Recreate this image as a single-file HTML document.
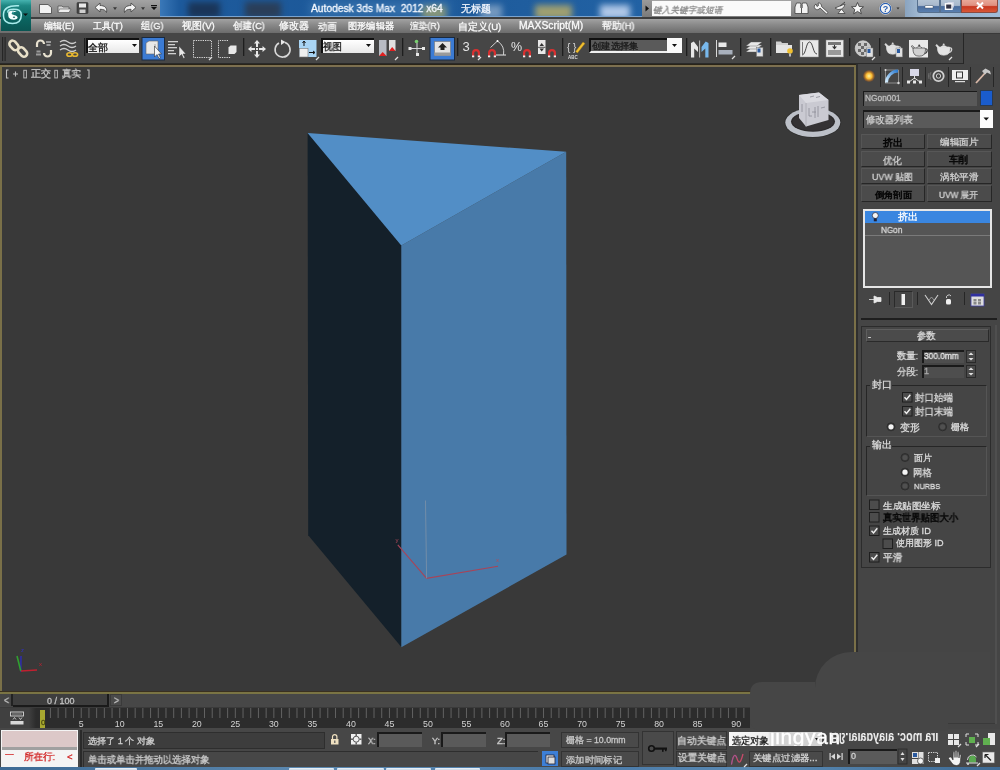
<!DOCTYPE html>
<html><head><meta charset="utf-8">
<style>
*{margin:0;padding:0;box-sizing:border-box}
html,body{width:1000px;height:770px;overflow:hidden;background:#464646;font-family:"Liberation Sans",sans-serif;}
.a{position:absolute}
.t{position:absolute;white-space:nowrap;line-height:1;color:#dcdcdc;will-change:transform;-webkit-text-stroke:0.3px currentColor}
svg{position:absolute;left:0;top:0;will-change:transform}
</style></head><body>
<div class="a" style="left:0px;top:0px;width:1000px;height:18px;background:linear-gradient(#a4a4a4,#7c7c7c)"></div>
<div class="a" style="left:0px;top:17px;width:1000px;height:1px;background:#3c3c3c"></div>
<div class="a" style="left:160px;top:0;width:482px;height:17px;overflow:hidden;background:linear-gradient(90deg,#3a78b8 0%,#1d5a9c 4%,#1c5898 50%,#2262a4 100%)"><div class="a" style="left:28px;top:2px;width:32px;height:16px;background:#1a3558;filter:blur(3px)"></div><div class="a" style="left:85px;top:2px;width:36px;height:16px;background:#2a3e58;filter:blur(3px)"></div><div class="a" style="left:150px;top:1px;width:140px;height:16px;background:#3f7ab4;filter:blur(5px);opacity:0.7"></div><div class="a" style="left:262px;top:6px;width:24px;height:14px;background:#9aa070;filter:blur(3px);opacity:0.8"></div><div class="a" style="left:320px;top:5px;width:22px;height:14px;background:#8aa8c8;filter:blur(3px);opacity:0.8"></div><div class="a" style="left:375px;top:5px;width:37px;height:14px;background:#a0a070;filter:blur(3px)"></div><div class="a" style="left:440px;top:5px;width:30px;height:14px;background:#b0c8e8;filter:blur(3px)"></div></div>
<div class="a" style="left:160px;top:15.5px;width:482px;height:1.5px;background:#7aa4d0"></div>
<div class="a" style="left:642px;top:0px;width:10px;height:17px;background:linear-gradient(#9a9a9a,#7a7a7a)"></div>
<div class="a" style="left:652px;top:1px;width:139px;height:15px;background:#fafafa"></div>
<div class="a" style="left:905px;top:0px;width:95px;height:17px;background:linear-gradient(90deg,#8aa4c0,#a8c0d8 20%,#98b4d0 60%,#a0bcd8)"></div>
<div class="a" style="left:917px;top:0px;width:23px;height:12.5px;background:linear-gradient(#b4c4d4 0%,#a8b8cc 45%,#4a6c9c 55%,#5a80b0 100%);border:1px solid #56708e;border-top:none;border-radius:0 0 0 3px"></div>
<div class="a" style="left:940px;top:0px;width:21px;height:12.5px;background:linear-gradient(#b4c4d4 0%,#a8b8cc 45%,#4a6c9c 55%,#5a80b0 100%);border:1px solid #56708e;border-top:none"></div>
<div class="a" style="left:961px;top:0px;width:37px;height:12.5px;background:linear-gradient(#e8a898 0%,#e09080 45%,#c83820 55%,#d85838 100%);border:1px solid #8a4a40;border-top:none;border-radius:0 0 3px 0"></div>
<div class="a" style="left:0px;top:17px;width:1000px;height:2px;background:#3e3e3e"></div>
<div class="a" style="left:0px;top:19px;width:1000px;height:14px;background:linear-gradient(#a2a2a2,#8a8a8a 40%,#6c6c6c)"></div>
<div class="a" style="left:0px;top:33px;width:1000px;height:1px;background:#3a3a3a"></div>
<div class="a" style="left:1px;top:0px;width:30px;height:31px;background:linear-gradient(#46b3b0 0%,#1e8783 18%,#0b6561 60%,#0a5552 100%)"></div>
<div class="a" style="left:0px;top:33px;width:963px;height:31px;background:#464646"></div>
<div class="a" style="left:963px;top:33px;width:1px;height:31px;background:#262626"></div>
<div class="a" style="left:0px;top:63px;width:963px;height:1px;background:#2a2a2a"></div>
<div class="a" style="left:86px;top:38px;width:53px;height:15px;background:linear-gradient(#fff,#e8e8e8);border-top:2px solid #111;border-left:2px solid #111"></div>
<div class="a" style="left:321px;top:38px;width:53px;height:15px;background:linear-gradient(#fff,#e8e8e8);border-top:2px solid #111;border-left:2px solid #111"></div>
<div class="a" style="left:589px;top:38px;width:93px;height:15px;background:#5a5a5a;border:2px solid #f0f0f0;border-top-color:#111;border-left-color:#111"></div>
<div class="a" style="left:667px;top:38px;width:15px;height:15px;background:#fafafa"></div>
<div class="a" style="left:0px;top:64px;width:857px;height:630px;background:#393939"></div>
<div class="a" style="left:0px;top:64px;width:857px;height:1px;background:#2a2418"></div>
<div class="a" style="left:0px;top:65px;width:856px;height:2px;background:#7d7050"></div>
<div class="a" style="left:0px;top:65px;width:2px;height:629px;background:#7a7048"></div>
<div class="a" style="left:854px;top:65px;width:2px;height:629px;background:#7a7048"></div>
<div class="a" style="left:0px;top:691px;width:856px;height:1px;background:#3a3020"></div>
<div class="a" style="left:0px;top:692px;width:856px;height:2px;background:#7a7444"></div>
<div class="a" style="left:856px;top:64px;width:2px;height:630px;background:#2e2e2e"></div>
<div class="a" style="left:858px;top:64px;width:142px;height:666px;background:#454545"></div>
<div class="a" style="left:880px;top:67px;width:1px;height:20px;background:#262626"></div>
<div class="a" style="left:902px;top:67px;width:1px;height:20px;background:#262626"></div>
<div class="a" style="left:925px;top:67px;width:1px;height:20px;background:#262626"></div>
<div class="a" style="left:948px;top:67px;width:1px;height:20px;background:#262626"></div>
<div class="a" style="left:970px;top:67px;width:1px;height:20px;background:#262626"></div>
<div class="a" style="left:993px;top:67px;width:1px;height:20px;background:#262626"></div>
<div class="a" style="left:863px;top:91px;width:114px;height:15px;background:#595959;border-top:1px solid #1a1a1a;border-left:1px solid #1a1a1a"></div>
<div class="a" style="left:980px;top:90px;width:13px;height:16px;background:#1a5ccc;border:1px solid #2a3a50"></div>
<div class="a" style="left:863px;top:110px;width:117px;height:18px;background:#5a5a5a;border-top:2px solid #1a1a1a;border-left:1px solid #1a1a1a"></div>
<div class="a" style="left:980px;top:110px;width:13px;height:18px;background:#fdfdfd"></div>
<div class="a" style="left:861px;top:134px;width:64px;height:15px;background:#4b4b4b;border-right:1px solid #262626;border-bottom:1px solid #262626;border-top:1px solid #575757;border-left:1px solid #555"></div>
<div class="a" style="left:927px;top:134px;width:65px;height:15px;background:#4b4b4b;border-right:1px solid #262626;border-bottom:1px solid #262626;border-top:1px solid #575757;border-left:1px solid #555"></div>
<div class="a" style="left:861px;top:151px;width:64px;height:16px;background:#4b4b4b;border-right:1px solid #262626;border-bottom:1px solid #262626;border-top:1px solid #575757;border-left:1px solid #555"></div>
<div class="a" style="left:927px;top:151px;width:65px;height:16px;background:#4b4b4b;border-right:1px solid #262626;border-bottom:1px solid #262626;border-top:1px solid #575757;border-left:1px solid #555"></div>
<div class="a" style="left:861px;top:168px;width:64px;height:16px;background:#4b4b4b;border-right:1px solid #262626;border-bottom:1px solid #262626;border-top:1px solid #575757;border-left:1px solid #555"></div>
<div class="a" style="left:927px;top:168px;width:65px;height:16px;background:#4b4b4b;border-right:1px solid #262626;border-bottom:1px solid #262626;border-top:1px solid #575757;border-left:1px solid #555"></div>
<div class="a" style="left:861px;top:185px;width:64px;height:17px;background:#4b4b4b;border-right:1px solid #262626;border-bottom:1px solid #262626;border-top:1px solid #575757;border-left:1px solid #555"></div>
<div class="a" style="left:927px;top:185px;width:65px;height:17px;background:#4b4b4b;border-right:1px solid #262626;border-bottom:1px solid #262626;border-top:1px solid #575757;border-left:1px solid #555"></div>
<div class="a" style="left:863px;top:209px;width:129px;height:79px;background:#555;border:2px solid #e6e6e6"></div>
<div class="a" style="left:865px;top:211px;width:125px;height:12px;background:#3a86e0"></div>
<div class="a" style="left:865px;top:235px;width:125px;height:1px;background:#7a7a7a"></div>
<div class="a" style="left:894px;top:291px;width:19px;height:17px;border:1px solid #2a2a2a;border-right-color:#5a5a5a;border-bottom-color:#5a5a5a"></div>
<div class="a" style="left:889px;top:292px;width:1px;height:13px;background:#262626"></div>
<div class="a" style="left:917px;top:292px;width:1px;height:13px;background:#262626"></div>
<div class="a" style="left:964px;top:292px;width:1px;height:13px;background:#262626"></div>
<div class="a" style="left:861px;top:318px;width:136px;height:2px;background:#1e1e1e"></div>
<div class="a" style="left:995px;top:325px;width:1.5px;height:399px;background:#4f4f4f"></div>
<div class="a" style="left:861px;top:723px;width:134px;height:1px;background:#3a3a3a"></div>
<div class="a" style="left:861px;top:326px;width:130px;height:242px;border:1px solid #2c2c2c"></div>
<div class="a" style="left:866px;top:329px;width:123px;height:13px;background:#4b4b4b;border:1px solid #5e5e5e;border-bottom-color:#2a2a2a;border-right-color:#2a2a2a"></div>
<div class="a" style="left:922px;top:350px;width:42px;height:13px;background:#4e4e4e;border-top:2px solid #1a1a1a;border-left:2px solid #1a1a1a"></div>
<div class="a" style="left:966px;top:350px;width:10px;height:13px;background:#4a4a4a;border:1px solid #2a2a2a"></div>
<div class="a" style="left:922px;top:365px;width:42px;height:13px;background:#4e4e4e;border-top:2px solid #1a1a1a;border-left:2px solid #1a1a1a"></div>
<div class="a" style="left:966px;top:365px;width:10px;height:13px;background:#4a4a4a;border:1px solid #2a2a2a"></div>
<div class="a" style="left:866px;top:385px;width:121px;height:52px;border:1px solid #262626;border-right-color:#555;border-bottom-color:#555"></div>
<div class="a" style="left:866px;top:446px;width:121px;height:50px;border:1px solid #262626;border-right-color:#555;border-bottom-color:#555"></div>
<div class="a" style="left:870px;top:380px;width:22px;height:10px;background:#464646"></div>
<div class="a" style="left:870px;top:441px;width:22px;height:10px;background:#464646"></div>
<div class="a" style="left:0px;top:694px;width:750px;height:14px;background:#474747"></div>
<div class="a" style="left:0px;top:694px;width:11px;height:12px;background:#454545"></div>
<div class="a" style="left:11px;top:694px;width:2px;height:12px;background:#222"></div>
<div class="a" style="left:13px;top:694px;width:96px;height:13px;background:#3e3e3e;border-bottom:2px solid #1a1a1a;border-right:2px solid #1a1a1a"></div>
<div class="a" style="left:110px;top:694px;width:12px;height:12px;background:#4a4a4a;border:1px solid #3a3a3a"></div>
<div class="a" style="left:0px;top:707px;width:750px;height:1px;background:#3a3a3a"></div>
<div class="a" style="left:0px;top:708px;width:750px;height:20px;background:#2c2c2c"></div>
<div class="a" style="left:0px;top:708px;width:36px;height:20px;background:linear-gradient(90deg,#404040 0%,#404040 80%,#2c2c2c 100%)"></div>
<div class="a" style="left:0px;top:728px;width:750px;height:3px;background:#474747"></div>
<div class="a" style="left:40px;top:710px;width:5px;height:18px;background:#a8a830"></div>
<div class="a" style="left:0px;top:729px;width:1000px;height:38px;background:#474747"></div>
<div class="a" style="left:80px;top:730px;width:2px;height:37px;background:#2a2a2a"></div>
<div class="a" style="left:1px;top:730px;width:77px;height:37px;background:#f4f4f4"></div>
<div class="a" style="left:2px;top:731px;width:75px;height:16px;background:#dcc8c8"></div>
<div class="a" style="left:2px;top:747px;width:75px;height:3px;background:#a0a0a0"></div>
<div class="a" style="left:83px;top:732px;width:242px;height:17px;background:#3d3d3d;border:1px solid #2e2e2e"></div>
<div class="a" style="left:83px;top:751px;width:455px;height:16px;background:#474747;border-top:1px solid #2e2e2e;border-left:1px solid #2e2e2e"></div>
<div class="a" style="left:377px;top:732px;width:45px;height:15px;background:#5a5a5a;border-top:2px solid #1a1a1a;border-left:2px solid #1a1a1a"></div>
<div class="a" style="left:441px;top:732px;width:45px;height:15px;background:#5a5a5a;border-top:2px solid #1a1a1a;border-left:2px solid #1a1a1a"></div>
<div class="a" style="left:505px;top:732px;width:45px;height:15px;background:#5a5a5a;border-top:2px solid #1a1a1a;border-left:2px solid #1a1a1a"></div>
<div class="a" style="left:561px;top:732px;width:78px;height:16px;background:#4a4a4a;border:1px solid #333"></div>
<div class="a" style="left:561px;top:751px;width:78px;height:16px;background:#4a4a4a;border:1px solid #333"></div>
<div class="a" style="left:542px;top:751px;width:16px;height:15px;background:#3d7fd6"></div>
<div class="a" style="left:642px;top:731px;width:32px;height:34px;background:#4a4a4a;border:1px solid #333"></div>
<div class="a" style="left:676px;top:731px;width:51px;height:19px;background:#4a4a4a;border:1px solid #333"></div>
<div class="a" style="left:676px;top:751px;width:51px;height:16px;background:#4a4a4a;border:1px solid #333"></div>
<div class="a" style="left:729px;top:732px;width:93px;height:14px;background:linear-gradient(90deg,#f6f6f6 0%,#f0f0f0 42%,#d2d2d2 46%,#d2d2d2 100%)"></div>
<div class="a" style="left:749px;top:751px;width:74px;height:16px;background:#4a4a4a;border:1px solid #333"></div>
<div class="a" style="left:848px;top:749px;width:49px;height:15px;background:#5a5a5a;border-top:2px solid #1a1a1a;border-left:2px solid #1a1a1a"></div>
<div class="a" style="left:0px;top:767px;width:1000px;height:3px;background:linear-gradient(90deg,#3d6a94,#5b88b0 30%,#4a7aa8 60%,#5a8ab4 75%,#3d6a94)"></div>
<div class="a" style="left:95px;top:767.5px;width:42px;height:2.5px;background:linear-gradient(#f0f4f8,#c8d8e8);border-radius:1px 1px 0 0"></div>
<div class="a" style="left:289px;top:767.5px;width:45px;height:2.5px;background:linear-gradient(#f0f4f8,#c8d8e8);border-radius:1px 1px 0 0"></div>
<div class="a" style="left:337px;top:767.5px;width:47px;height:2.5px;background:linear-gradient(#f0f4f8,#c8d8e8);border-radius:1px 1px 0 0"></div>
<div class="a" style="left:386px;top:767.5px;width:45px;height:2.5px;background:linear-gradient(#f0f4f8,#c8d8e8);border-radius:1px 1px 0 0"></div>
<div class="a" style="left:435px;top:767.5px;width:45px;height:2.5px;background:linear-gradient(#f0f4f8,#c8d8e8);border-radius:1px 1px 0 0"></div>
<svg width="1000" height="770" viewBox="0 0 1000 770"><path d="M8.5,70 H6.5 V78 H8.5 M87,70 H89 V78 H87" fill="none" stroke="#c0c0c0" stroke-width="1.1"/><path d="M15.5,71.5 V76.5 M13,74 H18" stroke="#c0c0c0" stroke-width="1.1"/><rect x="23.8" y="70.3" width="2.6" height="7.6" fill="none" stroke="#b8b8b8" stroke-width="1"/><rect x="54.8" y="70.3" width="2.6" height="7.6" fill="none" stroke="#b8b8b8" stroke-width="1"/><rect x="49.91" y="708" width="1" height="10" fill="#626262"/><rect x="57.61" y="708" width="1" height="10" fill="#626262"/><rect x="65.31" y="708" width="1" height="10" fill="#626262"/><rect x="73.02" y="708" width="1" height="10" fill="#626262"/><rect x="80.72" y="708" width="1" height="10" fill="#626262"/><text x="81.22" y="726.6" font-size="8.8" text-anchor="middle" fill="#d4d4d4" font-family="Liberation Sans">5</text><rect x="88.43" y="708" width="1" height="10" fill="#626262"/><rect x="96.14" y="708" width="1" height="10" fill="#626262"/><rect x="103.84" y="708" width="1" height="10" fill="#626262"/><rect x="111.55" y="708" width="1" height="10" fill="#626262"/><rect x="119.25" y="708" width="1" height="10" fill="#626262"/><text x="119.75" y="726.6" font-size="8.8" text-anchor="middle" fill="#d4d4d4" font-family="Liberation Sans">10</text><rect x="126.95" y="708" width="1" height="10" fill="#626262"/><rect x="134.66" y="708" width="1" height="10" fill="#626262"/><rect x="142.37" y="708" width="1" height="10" fill="#626262"/><rect x="150.07" y="708" width="1" height="10" fill="#626262"/><rect x="157.78" y="708" width="1" height="10" fill="#626262"/><text x="158.28" y="726.6" font-size="8.8" text-anchor="middle" fill="#d4d4d4" font-family="Liberation Sans">15</text><rect x="165.48" y="708" width="1" height="10" fill="#626262"/><rect x="173.19" y="708" width="1" height="10" fill="#626262"/><rect x="180.89" y="708" width="1" height="10" fill="#626262"/><rect x="188.60" y="708" width="1" height="10" fill="#626262"/><rect x="196.30" y="708" width="1" height="10" fill="#626262"/><text x="196.80" y="726.6" font-size="8.8" text-anchor="middle" fill="#d4d4d4" font-family="Liberation Sans">20</text><rect x="204.00" y="708" width="1" height="10" fill="#626262"/><rect x="211.71" y="708" width="1" height="10" fill="#626262"/><rect x="219.42" y="708" width="1" height="10" fill="#626262"/><rect x="227.12" y="708" width="1" height="10" fill="#626262"/><rect x="234.82" y="708" width="1" height="10" fill="#626262"/><text x="235.32" y="726.6" font-size="8.8" text-anchor="middle" fill="#d4d4d4" font-family="Liberation Sans">25</text><rect x="242.53" y="708" width="1" height="10" fill="#626262"/><rect x="250.24" y="708" width="1" height="10" fill="#626262"/><rect x="257.94" y="708" width="1" height="10" fill="#626262"/><rect x="265.64" y="708" width="1" height="10" fill="#626262"/><rect x="273.35" y="708" width="1" height="10" fill="#626262"/><text x="273.85" y="726.6" font-size="8.8" text-anchor="middle" fill="#d4d4d4" font-family="Liberation Sans">30</text><rect x="281.06" y="708" width="1" height="10" fill="#626262"/><rect x="288.76" y="708" width="1" height="10" fill="#626262"/><rect x="296.47" y="708" width="1" height="10" fill="#626262"/><rect x="304.17" y="708" width="1" height="10" fill="#626262"/><rect x="311.88" y="708" width="1" height="10" fill="#626262"/><text x="312.38" y="726.6" font-size="8.8" text-anchor="middle" fill="#d4d4d4" font-family="Liberation Sans">35</text><rect x="319.58" y="708" width="1" height="10" fill="#626262"/><rect x="327.28" y="708" width="1" height="10" fill="#626262"/><rect x="334.99" y="708" width="1" height="10" fill="#626262"/><rect x="342.69" y="708" width="1" height="10" fill="#626262"/><rect x="350.40" y="708" width="1" height="10" fill="#626262"/><text x="350.90" y="726.6" font-size="8.8" text-anchor="middle" fill="#d4d4d4" font-family="Liberation Sans">40</text><rect x="358.11" y="708" width="1" height="10" fill="#626262"/><rect x="365.81" y="708" width="1" height="10" fill="#626262"/><rect x="373.51" y="708" width="1" height="10" fill="#626262"/><rect x="381.22" y="708" width="1" height="10" fill="#626262"/><rect x="388.93" y="708" width="1" height="10" fill="#626262"/><text x="389.43" y="726.6" font-size="8.8" text-anchor="middle" fill="#d4d4d4" font-family="Liberation Sans">45</text><rect x="396.63" y="708" width="1" height="10" fill="#626262"/><rect x="404.33" y="708" width="1" height="10" fill="#626262"/><rect x="412.04" y="708" width="1" height="10" fill="#626262"/><rect x="419.75" y="708" width="1" height="10" fill="#626262"/><rect x="427.45" y="708" width="1" height="10" fill="#626262"/><text x="427.95" y="726.6" font-size="8.8" text-anchor="middle" fill="#d4d4d4" font-family="Liberation Sans">50</text><rect x="435.15" y="708" width="1" height="10" fill="#626262"/><rect x="442.86" y="708" width="1" height="10" fill="#626262"/><rect x="450.56" y="708" width="1" height="10" fill="#626262"/><rect x="458.27" y="708" width="1" height="10" fill="#626262"/><rect x="465.97" y="708" width="1" height="10" fill="#626262"/><text x="466.47" y="726.6" font-size="8.8" text-anchor="middle" fill="#d4d4d4" font-family="Liberation Sans">55</text><rect x="473.68" y="708" width="1" height="10" fill="#626262"/><rect x="481.38" y="708" width="1" height="10" fill="#626262"/><rect x="489.09" y="708" width="1" height="10" fill="#626262"/><rect x="496.80" y="708" width="1" height="10" fill="#626262"/><rect x="504.50" y="708" width="1" height="10" fill="#626262"/><text x="505.00" y="726.6" font-size="8.8" text-anchor="middle" fill="#d4d4d4" font-family="Liberation Sans">60</text><rect x="512.21" y="708" width="1" height="10" fill="#626262"/><rect x="519.91" y="708" width="1" height="10" fill="#626262"/><rect x="527.62" y="708" width="1" height="10" fill="#626262"/><rect x="535.32" y="708" width="1" height="10" fill="#626262"/><rect x="543.02" y="708" width="1" height="10" fill="#626262"/><text x="543.52" y="726.6" font-size="8.8" text-anchor="middle" fill="#d4d4d4" font-family="Liberation Sans">65</text><rect x="550.73" y="708" width="1" height="10" fill="#626262"/><rect x="558.44" y="708" width="1" height="10" fill="#626262"/><rect x="566.14" y="708" width="1" height="10" fill="#626262"/><rect x="573.85" y="708" width="1" height="10" fill="#626262"/><rect x="581.55" y="708" width="1" height="10" fill="#626262"/><text x="582.05" y="726.6" font-size="8.8" text-anchor="middle" fill="#d4d4d4" font-family="Liberation Sans">70</text><rect x="589.25" y="708" width="1" height="10" fill="#626262"/><rect x="596.96" y="708" width="1" height="10" fill="#626262"/><rect x="604.67" y="708" width="1" height="10" fill="#626262"/><rect x="612.37" y="708" width="1" height="10" fill="#626262"/><rect x="620.08" y="708" width="1" height="10" fill="#626262"/><text x="620.58" y="726.6" font-size="8.8" text-anchor="middle" fill="#d4d4d4" font-family="Liberation Sans">75</text><rect x="627.78" y="708" width="1" height="10" fill="#626262"/><rect x="635.49" y="708" width="1" height="10" fill="#626262"/><rect x="643.19" y="708" width="1" height="10" fill="#626262"/><rect x="650.90" y="708" width="1" height="10" fill="#626262"/><rect x="658.60" y="708" width="1" height="10" fill="#626262"/><text x="659.10" y="726.6" font-size="8.8" text-anchor="middle" fill="#d4d4d4" font-family="Liberation Sans">80</text><rect x="666.31" y="708" width="1" height="10" fill="#626262"/><rect x="674.01" y="708" width="1" height="10" fill="#626262"/><rect x="681.72" y="708" width="1" height="10" fill="#626262"/><rect x="689.42" y="708" width="1" height="10" fill="#626262"/><rect x="697.12" y="708" width="1" height="10" fill="#626262"/><text x="697.62" y="726.6" font-size="8.8" text-anchor="middle" fill="#d4d4d4" font-family="Liberation Sans">85</text><rect x="704.83" y="708" width="1" height="10" fill="#626262"/><rect x="712.54" y="708" width="1" height="10" fill="#626262"/><rect x="720.24" y="708" width="1" height="10" fill="#626262"/><rect x="727.95" y="708" width="1" height="10" fill="#626262"/><rect x="735.65" y="708" width="1" height="10" fill="#626262"/><text x="736.15" y="726.6" font-size="8.8" text-anchor="middle" fill="#d4d4d4" font-family="Liberation Sans">90</text><rect x="743.36" y="708" width="1" height="10" fill="#626262"/><polygon points="307.6,133.1 401.5,245.5 401.5,647.2 308.2,535.2" fill="#14202a"/><polygon points="401.3,245.5 566.2,151.8 566.5,554.4 401.3,647.2" fill="#487aa9"/><polygon points="307.6,133.1 566.2,151.8 401.3,245.5" fill="#528ec6"/><polyline points="397.8,544.8 426.6,578.4 498,566.2" fill="none" stroke="#a84458" stroke-width="1.1"/><line x1="426.6" y1="578.4" x2="425.5" y2="500.5" stroke="#7890a8" stroke-width="0.9"/><path d="M762,682 L815,682 L815,688 A36,36 0 0 1 851,652 L990,652 L990,723 L948,723 L948,731 L762,731 C754,731 750,726 750,719 L750,694 C750,686 754,682 762,682 Z" fill="#464646"/><path d="M18.5,5.8 C12,5.5 4,6.5 3.5,14 C3,21 7,23.5 12.5,23.5 C18,23.5 21.3,21 21.3,15 C21.3,10 18.5,9.3 13.5,9.3 C10,9.3 7.8,10.5 7.8,12" fill="none" stroke="#a8ecec" stroke-width="1.5" stroke-linecap="round"/><path d="M8.2,13 C8.5,10.3 14,10 16.8,12 C14.5,11.8 11.6,12.2 11.6,13.6 C11.6,15.2 17.6,15 17.6,17.6 C17.6,20.3 10.5,20.6 8.6,17.2 C8.2,16 8.2,14.5 8.2,13 Z" fill="#f4ffff"/><circle cx="13" cy="12.6" r="1" fill="#3aa0a0"/><ellipse cx="14" cy="17.3" rx="1.2" ry="0.7" fill="#2a7070"/><polygon points="23,13.5 28,13.5 25.5,16" fill="#111"/><path d="M39.5,4.5 H48 L51.5,7.5 V13.5 H39.5 Z" fill="#f2f2f2" stroke="#444" stroke-width="0.8"/><path d="M58,6 H62 L63,7 H69 V12.5 H58 Z" fill="#d8d8d8" stroke="#555" stroke-width="0.8"/><path d="M59.5,9 H71 L69,12.5 H58 Z" fill="#eee" stroke="#555" stroke-width="0.6"/><rect x="77" y="2.5" width="11" height="11" rx="1" fill="#444" stroke="#333" stroke-width="0.6"/><rect x="79" y="3.5" width="7" height="4" fill="#e8e8e8"/><rect x="79.5" y="9.5" width="6" height="3.5" fill="#cfcfcf"/><path d="M95,7.5 L100,3 V5.5 C104.5,5.5 107.5,7.5 106.5,12.5 C105.5,10 103.5,9.3 100,9.3 V12 Z" fill="#f4f4f4" stroke="#4a4a4a" stroke-width="0.9" stroke-linejoin="round"/><polygon points="113,7.3 117,7.3 115,10" fill="#3a3a3a"/><path d="M136,7.5 L131,3 V5.5 C126.5,5.5 123.5,7.5 124.5,12.5 C125.5,10 127.5,9.3 131,9.3 V12 Z" fill="#f4f4f4" stroke="#4a4a4a" stroke-width="0.9" stroke-linejoin="round"/><polygon points="141,7.3 145,7.3 143,10" fill="#3a3a3a"/><rect x="151" y="5" width="6" height="1.2" fill="#111"/><polygon points="151,7 157,7 154,10" fill="#111"/><polygon points="645.5,5.5 649,8.5 645.5,11.5" fill="#111"/><g fill="#f4f4f4" stroke="#333" stroke-width="0.7"><path d="M796.5,3 H800.5 L801.5,7 V13.5 H795 V7 Z"/><path d="M802.5,3 H806.5 L808,7 V13.5 H801.5 V7 Z"/></g><rect x="800.2" y="5" width="2.6" height="3" fill="#777"/><path d="M816,4 A3,3 0 1 0 820,8 L826.5,14 L828,12.5 L821.5,6.5 A3,3 0 0 0 818,3 L818.5,5.5 L817,6.5 Z" fill="#f4f4f4" stroke="#333" stroke-width="0.7"/><path d="M835,8 A6,6 0 0 0 845,4 Z" fill="#f4f4f4" stroke="#333" stroke-width="0.7"/><path d="M838,13.5 H845 L841.5,9 Z" fill="#f4f4f4" stroke="#333" stroke-width="0.7"/><line x1="840" y1="6" x2="845" y2="2" stroke="#333" stroke-width="0.8"/><polygon points="857.5,2.5 859.2,6.5 863.5,6.8 860.2,9.5 861.3,13.8 857.5,11.4 853.7,13.8 854.8,9.5 851.5,6.8 855.8,6.5" fill="#f8f8f8" stroke="#333" stroke-width="0.8"/><circle cx="885.5" cy="8.5" r="6.5" fill="#f4f4f4" stroke="#777" stroke-width="0.6"/><circle cx="885.5" cy="8.5" r="5.2" fill="none" stroke="#2a5fb0" stroke-width="1.2"/><text x="885.5" y="12" font-size="9" font-weight="bold" text-anchor="middle" fill="#2a5fb0" font-family="Liberation Sans">?</text><polygon points="896.5,7.5 899.5,7.5 898,9.5" fill="#333"/><rect x="925" y="5.8" width="8" height="2.2" fill="#fff" stroke="#345" stroke-width="0.4"/><rect x="945.5" y="3.8" width="6.5" height="5.5" fill="#334" stroke="#fff" stroke-width="1.4"/><path d="M947.5,2.5 H953.5 V7.5" fill="none" stroke="#dde" stroke-width="0.8"/><path d="M977,2.5 L983,8.5 M983,2.5 L977,8.5" stroke="#fff" stroke-width="2"/><rect x="2" y="37" width="1.2" height="24" fill="#262626"/><rect x="4.5" y="37" width="1.2" height="24" fill="#262626"/><rect x="84" y="38" width="1.3" height="18" fill="#1e1e1e"/><rect x="243" y="38" width="1.3" height="18" fill="#1e1e1e"/><rect x="402" y="38" width="1.3" height="18" fill="#1e1e1e"/><rect x="457" y="38" width="1.3" height="18" fill="#1e1e1e"/><rect x="562" y="38" width="1.3" height="18" fill="#1e1e1e"/><rect x="686" y="38" width="1.3" height="18" fill="#1e1e1e"/><rect x="740" y="38" width="1.3" height="18" fill="#1e1e1e"/><rect x="770" y="38" width="1.3" height="18" fill="#1e1e1e"/><rect x="849" y="38" width="1.3" height="18" fill="#1e1e1e"/><rect x="879" y="38" width="1.3" height="18" fill="#1e1e1e"/><g fill="none" stroke="#e8e0c8" stroke-width="2.6"><rect x="10.8" y="40.2" width="6.5" height="10.5" rx="3.2" transform="rotate(-42 14 45.5)"/><rect x="19.3" y="46.8" width="6.5" height="10.5" rx="3.2" transform="rotate(-42 22.5 52)"/></g><path d="M37,47 V44 A3.5,3.5 0 0 1 44,44" fill="none" stroke="#e8e2d0" stroke-width="2.2"/><path d="M51,50 V53 A3.5,3.5 0 0 1 44,53" fill="none" stroke="#e8e2d0" stroke-width="2.2"/><g fill="#9a9a9a"><rect x="46" y="41" width="5" height="2"/><rect x="46.5" y="44" width="4" height="2"/><rect x="36.5" y="50.5" width="4" height="2"/><rect x="36" y="53.5" width="5" height="2"/></g><g fill="none" stroke="#cfcfcf" stroke-width="1.3"><path d="M60,42 Q64,39 68,42 T76,42"/><path d="M60,46 Q64,43 68,46 T76,46"/><path d="M60,50 Q64,47 68,50 T76,50"/></g><g fill="none" stroke="#e8b830" stroke-width="1.6"><ellipse cx="69.5" cy="54.5" rx="2.6" ry="1.8"/><ellipse cx="75" cy="54.5" rx="2.6" ry="1.8"/></g><polygon points="132,44 137,44 134.5,47" fill="#111"/><polygon points="366,44 371,44 368.5,47" fill="#111"/><polygon points="672,44 677,44 674.5,47" fill="#111"/><rect x="142" y="37.5" width="22.5" height="22.5" fill="#3b7bd4" stroke="#1a2a40" stroke-width="1"/><path d="M146,43 L149,41 H158 V52 L155,54 H146 Z" fill="#e8e8e8" stroke="#666" stroke-width="0.6"/><path d="M155,44 V54" stroke="#999" stroke-width="0.8"/><path d="M154.5,46 V57 L157,54.5 L159,58.5 L160.5,57.8 L158.5,54 H161.5 Z" fill="#f8f8f8" stroke="#333" stroke-width="0.6"/><g fill="#d0d0d0"><rect x="168" y="41" width="10" height="1.3"/><rect x="168" y="44" width="7" height="1.3"/><rect x="168" y="47" width="9" height="1.3"/><rect x="168" y="50" width="6" height="1.3"/><rect x="168" y="53" width="8" height="1.3"/></g><path d="M179,46 V57 L181.5,54.5 L183.5,58.5 L185,57.8 L183,54 H186 Z" fill="#e8e8e8" stroke="#333" stroke-width="0.5"/><rect x="193.5" y="40.5" width="18" height="17" fill="none" stroke="#d8d8d8" stroke-width="1" stroke-dasharray="1.3,1"/><path d="M209,60 L212,57" stroke="#e0e0e0" stroke-width="1.2"/><path d="M228,40.5 H218.5 V57.5 H231" fill="none" stroke="#d8d8d8" stroke-width="1" stroke-dasharray="1.3,1"/><path d="M228.5,47.5 L230.5,45.5 H236.5 V52 L234.5,54 H228.5 Z" fill="#e8e8e8"/><g fill="#e8e8e8"><polygon points="257,40 260,43.5 254,43.5"/><polygon points="257,58 260,54.5 254,54.5"/><polygon points="248,49 251.5,46 251.5,52"/><polygon points="266,49 262.5,46 262.5,52"/><rect x="256" y="43" width="2" height="4"/><rect x="256" y="51" width="2" height="4"/><rect x="251" y="48" width="4" height="2"/><rect x="259" y="48" width="4" height="2"/><rect x="256" y="48" width="2" height="2"/></g><path d="M285,42.5 A7.5,7.5 0 1 1 279,43" fill="none" stroke="#d8d8d8" stroke-width="1.6"/><polygon points="281,39.5 285.5,42 281,45" fill="#e8e8e8"/><rect x="299" y="40" width="17.5" height="17" fill="#a8d4f4"/><rect x="299.5" y="48.5" width="8.5" height="8.5" fill="#eeeeee" stroke="#777" stroke-width="0.6"/><path d="M304,46 V41.5 M302.5,43 L304,41 L305.5,43 M309,52.5 H314.5 M313,51 L315,52.5 L313,54" fill="none" stroke="#111" stroke-width="1"/><path d="M316,60 L319,57" stroke="#e0e0e0" stroke-width="1.2"/><rect x="379" y="40" width="7.5" height="16" fill="#b8bcc4"/><rect x="389" y="40" width="6.5" height="11" fill="#e0e0e0"/><polygon points="379,56 382.7,52 386.5,56" fill="#e02020"/><polygon points="389,51 392.2,47 395.5,51" fill="#e02020"/><path d="M395,60 L398,57" stroke="#e0e0e0" stroke-width="1.2"/><g stroke="#d8d8d8" stroke-width="1"><line x1="417" y1="43" x2="417" y2="54"/><line x1="410" y1="48.5" x2="424" y2="48.5"/></g><circle cx="416.5" cy="41.5" r="1.8" fill="#7ad070"/><rect x="408.5" y="47" width="3" height="3" fill="#e8e8e8"/><rect x="422" y="47" width="3" height="3" fill="#e8e8e8"/><rect x="416" y="53" width="3" height="3" fill="#e8e8e8"/><rect x="430" y="37.5" width="24.5" height="22.5" fill="#3b7bd4" stroke="#1a2a40" stroke-width="1"/><rect x="434.5" y="41.5" width="16" height="14" fill="#e4e4e4" stroke="#777" stroke-width="0.6"/><rect x="434.5" y="52.5" width="16" height="3" fill="#9a9a9a"/><polygon points="442.5,43 447,47.5 444.5,47.5 444.5,50 440.5,50 440.5,47.5 438,47.5" fill="#222"/><text x="462.5" y="50.5" font-size="13" fill="#e4e4e4" font-family="Liberation Sans">3</text><path d="M472,57 V53 A4,4 0 0 1 480,53 V57 H477.8 V53 A1.8,1.8 0 0 0 474.2,53 V57 Z" fill="#d83030"/><rect x="472" y="55.5" width="2.2" height="1.8" fill="#f0f0f0"/><rect x="477.8" y="55.5" width="2.2" height="1.8" fill="#f0f0f0"/><path d="M488,57 V53 A4,4 0 0 1 496,53 V57 H493.8 V53 A1.8,1.8 0 0 0 490.2,53 V57 Z" fill="#d83030"/><rect x="488" y="55.5" width="2.2" height="1.8" fill="#f0f0f0"/><rect x="493.8" y="55.5" width="2.2" height="1.8" fill="#f0f0f0"/><path d="M523,57 V53 A4,4 0 0 1 531,53 V57 H528.8 V53 A1.8,1.8 0 0 0 525.2,53 V57 Z" fill="#d83030"/><rect x="523" y="55.5" width="2.2" height="1.8" fill="#f0f0f0"/><rect x="528.8" y="55.5" width="2.2" height="1.8" fill="#f0f0f0"/><path d="M548,57 V53 A4,4 0 0 1 556,53 V57 H553.8 V53 A1.8,1.8 0 0 0 550.2,53 V57 Z" fill="#d83030"/><rect x="548" y="55.5" width="2.2" height="1.8" fill="#f0f0f0"/><rect x="553.8" y="55.5" width="2.2" height="1.8" fill="#f0f0f0"/><path d="M478,60 L481,57" stroke="#e0e0e0" stroke-width="1.2"/><path d="M490.5,47.5 L498,40.5 M497.5,41 A14,14 0 0 1 503.5,55" fill="none" stroke="#d0d0d0" stroke-width="1"/><path d="M496,55 H506" stroke="#d0d0d0" stroke-width="1.2"/><circle cx="497.5" cy="41" r="1" fill="#fff"/><text x="511" y="50.5" font-size="12.5" fill="#e4e4e4" font-family="Liberation Sans">%</text><rect x="538" y="40" width="7.5" height="14" fill="#e8e8e8"/><polygon points="539.5,46 541.7,43 544,46" fill="#333"/><polygon points="539.5,48.5 541.7,51.5 544,48.5" fill="#333"/><rect x="538" y="46.8" width="7.5" height="1" fill="#555"/><text x="567" y="51" font-size="10" fill="#d8d8d8" font-family="Liberation Sans">{ }</text><text x="568" y="58.5" font-size="4.5" fill="#d8d8d8" font-family="Liberation Sans" font-weight="bold">ABC</text><path d="M575.5,51.5 L583,42 L585,43.5 L577.5,53 Z" fill="#f0c030" stroke="#a07010" stroke-width="0.4"/><path d="M691,43 L693.8,41.5 L698,47 V52 L694.2,48.5 V57.5 H691 Z" fill="#e8e8e8"/><rect x="699.2" y="40.5" width="0.9" height="17" fill="#c8c8c8"/><path d="M708.5,43 L705.7,41.5 L701.5,47 V52 L705.3,48.5 V57.5 H708.5 Z" fill="#78b8ec"/><rect x="716" y="40" width="1" height="17" fill="#d8d8d8"/><rect x="718.5" y="42.5" width="8" height="4.5" fill="#e8e8e8"/><rect x="718.5" y="50" width="14" height="4.5" fill="#a8b0bc"/><path d="M732,59 L735,56" stroke="#e0e0e0" stroke-width="1.2"/><g fill="#e8e8e8" stroke="#555" stroke-width="0.4"><path d="M746,52 L751,48 H762 L757,52 Z"/><path d="M746,49 L751,45 H762 L757,49 Z"/><path d="M746,46 L751,42 H762 L757,46 Z"/></g><rect x="756.5" y="47.5" width="6.5" height="9" fill="#e0e0e0" stroke="#777" stroke-width="0.5"/><rect x="757.5" y="48.5" width="3" height="4" fill="#2a5aa0"/><path d="M776,45 V41.5 H781 L782,43 H788 V45 Z" fill="#cfcfcf"/><rect x="776" y="45" width="16" height="8" fill="#e4e4e4"/><circle cx="790" cy="51" r="2.8" fill="#f0c030"/><rect x="789" y="53.5" width="2" height="3" fill="#bbb"/><rect x="800" y="40" width="18.5" height="17" fill="#e8e8e8" stroke="#888" stroke-width="0.5"/><path d="M802,55 C806,55 806,42 809.5,42 C813,42 813,54 817,54" fill="none" stroke="#333" stroke-width="0.9"/><rect x="802" y="42" width="1" height="13" fill="#777"/><rect x="826" y="40" width="17.5" height="17" fill="#e8e8e8" stroke="#888" stroke-width="0.5"/><rect x="828" y="42" width="13" height="3" fill="#777"/><rect x="828" y="50" width="13" height="5" fill="#999"/><polygon points="832,46.5 837,46.5 834.5,49.5" fill="#333"/><rect x="834" y="45" width="1" height="2" fill="#333"/><circle cx="863" cy="48.5" r="7.8" fill="#c8c8c8" stroke="#e0e0e0" stroke-width="0.6"/><g fill="#6a6a6a"><rect x="858" y="43" width="3" height="3"/><rect x="864" y="43" width="3" height="3"/><rect x="861" y="46" width="3" height="3"/><rect x="858" y="49" width="3" height="3"/><rect x="864" y="49" width="3" height="3"/><rect x="861" y="52" width="3" height="3"/></g><rect x="866.5" y="48" width="6.5" height="9" fill="#e0e0e0" stroke="#777" stroke-width="0.5"/><rect x="867.5" y="49" width="3" height="4" fill="#2a5aa0"/><path d="M872,60 L875,57" stroke="#e0e0e0" stroke-width="1.2"/><g transform="translate(884,41) scale(1)"><path d="M3.5,7 L0.8,3.2 L2,2.6 L4.5,5.5" fill="#e0e0e0" stroke="#d8d8d8" stroke-width="0.7"/><path d="M14,6 C17.5,4.8 18,9.5 13.3,11" fill="none" stroke="#d8d8d8" stroke-width="1.2"/><path d="M3,5 H14.5 C15.5,6 15,10 13,12 C11.5,13.5 6,13.5 4.5,12 C2.5,10 2,6 3,5 Z" fill="#e0e0e0" stroke="#d8d8d8" stroke-width="0.7"/><path d="M6,5 C6.5,3.2 11,3.2 11.5,5" fill="#e0e0e0" stroke="#d8d8d8" stroke-width="0.7"/><circle cx="8.7" cy="2.6" r="1" fill="#d8d8d8"/></g><rect x="896" y="48" width="6.5" height="9" fill="#e0e0e0" stroke="#777" stroke-width="0.5"/><rect x="897" y="49" width="3" height="4" fill="#2a5aa0"/><rect x="909" y="40" width="19" height="17.5" fill="#e8e8e8"/><g transform="translate(910.5,43) scale(1)"><path d="M3.5,7 L0.8,3.2 L2,2.6 L4.5,5.5" fill="#d0d0d0" stroke="#444" stroke-width="0.7"/><path d="M14,6 C17.5,4.8 18,9.5 13.3,11" fill="none" stroke="#444" stroke-width="1.2"/><path d="M3,5 H14.5 C15.5,6 15,10 13,12 C11.5,13.5 6,13.5 4.5,12 C2.5,10 2,6 3,5 Z" fill="#d0d0d0" stroke="#444" stroke-width="0.7"/><path d="M6,5 C6.5,3.2 11,3.2 11.5,5" fill="#d0d0d0" stroke="#444" stroke-width="0.7"/><circle cx="8.7" cy="2.6" r="1" fill="#444"/></g><g transform="translate(935,42) scale(1)"><path d="M3.5,7 L0.8,3.2 L2,2.6 L4.5,5.5" fill="#e4e4e4" stroke="#d8d8d8" stroke-width="0.7"/><path d="M14,6 C17.5,4.8 18,9.5 13.3,11" fill="none" stroke="#d8d8d8" stroke-width="1.2"/><path d="M3,5 H14.5 C15.5,6 15,10 13,12 C11.5,13.5 6,13.5 4.5,12 C2.5,10 2,6 3,5 Z" fill="#e4e4e4" stroke="#d8d8d8" stroke-width="0.7"/><path d="M6,5 C6.5,3.2 11,3.2 11.5,5" fill="#e4e4e4" stroke="#d8d8d8" stroke-width="0.7"/><circle cx="8.7" cy="2.6" r="1" fill="#d8d8d8"/></g><path d="M949,60 L952,57" stroke="#e0e0e0" stroke-width="1.2"/><defs><radialGradient id="sun"><stop offset="0" stop-color="#fff4a0"/><stop offset="0.5" stop-color="#f8b830"/><stop offset="1" stop-color="#c86010" stop-opacity="0.2"/></radialGradient><linearGradient id="arc" x1="0" y1="1" x2="1" y2="0"><stop offset="0" stop-color="#d8f0ff"/><stop offset="1" stop-color="#2a7ad0"/></linearGradient></defs><circle cx="869" cy="76" r="6" fill="url(#sun)"/><rect x="885.5" y="70" width="13" height="13" fill="none" stroke="#c0c0c0" stroke-width="0.6"/><circle cx="885.5" cy="70" r="1" fill="#ddd"/><circle cx="898.5" cy="83" r="1.2" fill="#ddd"/><path d="M886.5,82.5 A12,12 0 0 1 898,71" fill="none" stroke="url(#arc)" stroke-width="3"/><rect x="910" y="69" width="9" height="7" fill="#d8d8e8"/><path d="M914.5,76 V79 M909,82 L914.5,78 L920,82" fill="none" stroke="#ddd" stroke-width="1"/><g fill="#e8e8e8"><rect x="907" y="80.5" width="3" height="3"/><rect x="913" y="80.5" width="3" height="3"/><rect x="919" y="80.5" width="3" height="3"/></g><circle cx="938.5" cy="76" r="5.2" fill="none" stroke="#d0d0d0" stroke-width="1.8"/><circle cx="938.5" cy="76" r="2.2" fill="none" stroke="#d0d0d0" stroke-width="1"/><path d="M931,72 A8,8 0 0 0 931,80 M929,73 A9,9 0 0 0 929,79" fill="none" stroke="#888" stroke-width="0.6"/><rect x="952" y="70" width="16" height="10" fill="#eeeeee"/><rect x="956.5" y="72" width="6" height="6" fill="none" stroke="#333" stroke-width="1"/><rect x="955" y="81" width="10" height="1.2" fill="#ddd"/><path d="M976,83 L986,72" stroke="#d8b8a8" stroke-width="1.8"/><path d="M982,71 L985.5,68.5 L990,71 L991,74.5 L987,72.5 L985,74.5 Z" fill="#c8c8c8"/><circle cx="875.3" cy="215.5" r="3" fill="#f4f4f4" stroke="#223" stroke-width="0.7"/><rect x="873.8" y="218.3" width="3" height="3" fill="#223"/><path d="M869,299.5 H874 M874,296 V303 L877.5,301.5 H881 V297.5 H877.5 Z" fill="#e8e8e8" stroke="#e8e8e8" stroke-width="0.8"/><rect x="901.5" y="294" width="3.5" height="11" fill="#f0f0f0"/><path d="M925,295 L931.5,304.5 L938,295" fill="none" stroke="#d0d0d0" stroke-width="1.1"/><path d="M929,300 L931.5,297 L934,300" fill="none" stroke="#aaa" stroke-width="0.8"/><rect x="946" y="299" width="5" height="5.5" rx="1.5" fill="#f0f0f0"/><path d="M946.5,298 A2.5,2.5 0 0 1 951,296" fill="none" stroke="#ddd" stroke-width="0.9"/><rect x="971" y="294" width="13" height="12" fill="#ddd" stroke="#4040a0" stroke-width="0.8"/><rect x="971" y="294" width="13" height="2.5" fill="#3030a0"/><g fill="#888"><rect x="973.5" y="299" width="3" height="2.5"/><rect x="978" y="299" width="3" height="2.5"/><rect x="973.5" y="302" width="3" height="2.5"/><rect x="978" y="302" width="3" height="2.5"/></g><polygon points="968.5,355 971,352.5 973.5,355" fill="#e0e0e0"/><polygon points="968.5,358 971,360.5 973.5,358" fill="#e0e0e0"/><polygon points="968.5,370 971,367.5 973.5,370" fill="#e0e0e0"/><polygon points="968.5,373 971,375.5 973.5,373" fill="#e0e0e0"/><rect x="902.5" y="392.5" width="9.5" height="9.5" fill="#4c4c4c" stroke="#1e1e1e" stroke-width="1"/><path d="M904.5,397.3 L906.5,399.5 L910.3,394.7" fill="none" stroke="#f0f0f0" stroke-width="1.4"/><rect x="902.5" y="406.5" width="9.5" height="9.5" fill="#4c4c4c" stroke="#1e1e1e" stroke-width="1"/><path d="M904.5,411.3 L906.5,413.5 L910.3,408.7" fill="none" stroke="#f0f0f0" stroke-width="1.4"/><rect x="869.5" y="500" width="9.5" height="9.5" fill="#4c4c4c" stroke="#1e1e1e" stroke-width="1"/><rect x="869.5" y="512.5" width="9.5" height="9.5" fill="#4c4c4c" stroke="#1e1e1e" stroke-width="1"/><rect x="869.5" y="526" width="9.5" height="9.5" fill="#4c4c4c" stroke="#1e1e1e" stroke-width="1"/><path d="M871.5,530.8 L873.5,533 L877.3,528.2" fill="none" stroke="#f0f0f0" stroke-width="1.4"/><rect x="883" y="539" width="9.5" height="9.5" fill="#4c4c4c" stroke="#1e1e1e" stroke-width="1"/><rect x="869.5" y="552.5" width="9.5" height="9.5" fill="#4c4c4c" stroke="#1e1e1e" stroke-width="1"/><path d="M871.5,557.3 L873.5,559.5 L877.3,554.7" fill="none" stroke="#f0f0f0" stroke-width="1.4"/><circle cx="891" cy="426.8" r="4" fill="#3a3a3a" stroke="#2a2a2a" stroke-width="0.8"/><circle cx="891" cy="426.8" r="2.6" fill="#f4f4f4"/><circle cx="942.6" cy="426.8" r="4" fill="#3a3a3a" stroke="#2a2a2a" stroke-width="0.8"/><circle cx="942.6" cy="426.8" r="2.6" fill="#505050"/><circle cx="905" cy="457.5" r="4" fill="#3a3a3a" stroke="#2a2a2a" stroke-width="0.8"/><circle cx="905" cy="457.5" r="2.6" fill="#505050"/><circle cx="905" cy="472.2" r="4" fill="#3a3a3a" stroke="#2a2a2a" stroke-width="0.8"/><circle cx="905" cy="472.2" r="2.6" fill="#f4f4f4"/><circle cx="905" cy="486" r="4" fill="#3a3a3a" stroke="#2a2a2a" stroke-width="0.8"/><circle cx="905" cy="486" r="2.6" fill="#505050"/><rect x="10.5" y="712" width="13" height="4" fill="none" stroke="#d8d8d8" stroke-width="0.9"/><rect x="12" y="713.3" width="10" height="1.4" fill="#777"/><path d="M13,719.5 L14.5,717.5 L16,719.5 M19,717.5 L20.5,719.5 L22,717.5" fill="none" stroke="#ddd" stroke-width="0.8"/><rect x="10.5" y="721" width="13" height="3.5" fill="#d8d8d8"/><rect x="331" y="739" width="7.5" height="5.5" fill="#efe0c0"/><path d="M332.5,739 V736.8 A2.2,2.2 0 0 1 336.9,736.8 V739" fill="none" stroke="#efe0c0" stroke-width="1.2"/><rect x="334.2" y="740.5" width="1.2" height="2.5" fill="#555"/><rect x="351" y="734" width="10.5" height="10.5" fill="#f0f0f0"/><circle cx="356.2" cy="739.2" r="3" fill="none" stroke="#555" stroke-width="1"/><g fill="#555"><rect x="355.5" y="734" width="1.4" height="2"/><rect x="355.5" y="742.5" width="1.4" height="2"/><rect x="351" y="738.5" width="2" height="1.4"/><rect x="359.5" y="738.5" width="2" height="1.4"/></g><rect x="546" y="755" width="8" height="8" fill="#f0f0f0" stroke="#223" stroke-width="0.8"/><rect x="548" y="757" width="7" height="7" fill="#ddd" stroke="#223" stroke-width="0.8"/><circle cx="651.5" cy="748.5" r="2.8" fill="none" stroke="#111" stroke-width="1.6"/><rect x="654" y="747.5" width="13" height="2.2" fill="#111"/><rect x="662" y="749" width="1.6" height="2.8" fill="#111"/><rect x="665" y="749" width="1.6" height="2.2" fill="#111"/><path d="M731.5,764.5 C733,755 735,753 736.8,758 C738.5,763 740,765.5 743,754" fill="none" stroke="#c84a6a" stroke-width="1.3"/><path d="M731.5,764.5 C733,755 735,753 736.8,758" fill="none" stroke="#8a60b0" stroke-width="0.7"/><path d="M744,767 L747,764" stroke="#e0e0e0" stroke-width="1.2"/><polygon points="815,738 821,738 818,742" fill="#111"/><polygon points="983.5,117.5 989,117.5 986.2,120.5" fill="#111"/><g fill="#d8d8d8"><rect x="829.5" y="753" width="1.2" height="7"/><polygon points="831,756.5 835,753.5 835,759.5"/><polygon points="841,756.5 837,753.5 837,759.5"/><rect x="841.5" y="753" width="1.2" height="7"/></g><rect x="898" y="749" width="9" height="15" fill="#444" stroke="#2a2a2a" stroke-width="0.8"/><polygon points="900.5,755 902.5,752 904.5,755" fill="#ddd"/><polygon points="900.5,758 902.5,761 904.5,758" fill="#ddd"/><rect x="912" y="752" width="6" height="6" fill="#e0e0e0"/><rect x="913" y="753" width="4" height="4" fill="#2a5aa0"/><rect x="912" y="759" width="6" height="5" fill="#e0e0e0"/><rect x="918.5" y="752" width="5" height="12" fill="#e0e0e0"/><circle cx="920.5" cy="761" r="3" fill="#f4f4f4" stroke="#333" stroke-width="0.7"/><rect x="928.5" y="752.5" width="9" height="9" fill="none" stroke="#d8d8d8" stroke-width="1" stroke-dasharray="1.3,1"/><rect x="935" y="758" width="5" height="5" fill="#f0f0f0"/><path d="M948.5,758.5 L951.5,762.5 C952.5,764.5 954.5,765.5 956.5,765.5 C959,765.5 960.5,763.5 960.5,760.5 L961,755.5 C961,754.3 959.5,754.3 959.3,755.5 L959,758 L958.8,752.5 C958.8,751.3 957.2,751.3 957.2,752.5 L957,757.5 L956.8,751.5 C956.8,750.3 955.2,750.3 955.2,751.5 L955,757.5 L954.8,752.5 C954.8,751.3 953.2,751.3 953.2,752.5 L953,760 L951.5,757.5 C950.5,756.5 948.8,757 948.5,758.5 Z" fill="#f4f4f4" stroke="#2a2a2a" stroke-width="0.6"/><path d="M967.5,760 A5,5 0 0 1 976.5,757" fill="none" stroke="#d8d8d8" stroke-width="1"/><path d="M969,759 A3.5,3.5 0 0 1 976,759.5 L976,762.5 H969 Z" fill="#5aa850"/><path d="M966,763 H978" stroke="#e0e0e0" stroke-width="1"/><path d="M977,766 L980,763" stroke="#e0e0e0" stroke-width="1.2"/><circle cx="968" cy="764" r="1" fill="#e0e0e0"/><rect x="982.5" y="752" width="12" height="11" fill="#e8e8e8" stroke="#666" stroke-width="0.6"/><path d="M985,754.5 L991,760.5 M985,754.5 H988.5 M985,754.5 V758" fill="none" stroke="#222" stroke-width="1.2"/><g fill="#e8e8e8"><rect x="948" y="734" width="5" height="5"/><rect x="954" y="734" width="5" height="5"/><rect x="948" y="740" width="5" height="5"/><rect x="954" y="740" width="5" height="5"/></g><path d="M958,747 L961,744" stroke="#e0e0e0" stroke-width="1.2"/><path d="M966,737 V734 H969 M975,734 H978 V737 M978,742 V745 H975 M969,745 H966 V742" fill="none" stroke="#e0e0e0" stroke-width="1"/><rect x="969" y="737" width="6" height="6" fill="#60b050"/><path d="M976,747 L979,744" stroke="#e0e0e0" stroke-width="1.2"/><g><rect x="988" y="733" width="7" height="6" fill="#e8e8e8"/><rect x="983" y="738" width="7" height="7" fill="#60b050"/><rect x="990" y="739" width="5" height="6" fill="#e8e8e8"/></g><line x1="20.8" y1="671.8" x2="21" y2="656" stroke="#2a2ad0" stroke-width="1.2"/><line x1="17" y1="656" x2="20.8" y2="671" stroke="#30a030" stroke-width="1.6"/><line x1="21" y1="671" x2="37" y2="670" stroke="#c02030" stroke-width="1.3"/><text x="21" y="652" font-size="6" fill="#3030c0" font-family="Liberation Sans">z</text><text x="39" y="666" font-size="6" fill="#c02030" font-family="Liberation Sans">x</text><text x="395.5" y="542" font-size="6" fill="#b04a5a" font-family="Liberation Sans">y</text><text x="496" y="562" font-size="6" fill="#b04a5a" font-family="Liberation Sans">x</text><ellipse cx="812.8" cy="122.6" rx="28.5" ry="15.2" fill="#303030"/><ellipse cx="812.8" cy="122.6" rx="27.5" ry="14.5" fill="#bcc0c8"/><ellipse cx="813" cy="121.6" rx="22" ry="10.2" fill="#2c2a2c"/><ellipse cx="813" cy="121.6" rx="20.5" ry="9" fill="#343234"/><polygon points="799,95 819,92.5 828.5,100 828.5,120 806,126.5 799,118" fill="#cacad2"/><polygon points="799,95 819,92.5 828.5,100 806,103" fill="#dadae0"/><path d="M806,103 V126.5" stroke="#a8a8b0" stroke-width="0.8"/><g stroke="#8a8a94" stroke-width="0.8" fill="none"><path d="M809,108 V116 H812 M815,107 V118 M818,106 V117 M821,108 L825,107 M810,97 L814,96 M816,97.5 L820,96.5 M802,104 V112 M812,112 H816"/></g></svg>
<div class="t" id="t0" style="left:311.00px;top:4.00px;font-size:10.31px;color:#f4f8ff;transform:scaleX(0.9925);transform-origin:0 0;">Autodesk 3ds Max&nbsp; 2012 x64</div><div class="t" id="t1" style="left:461.00px;top:4.00px;font-size:10.00px;color:#f4f8ff;">无标题</div><div class="t" id="t2" style="left:653.40px;top:5.85px;font-size:8.71px;color:#8a8a8a;transform:scaleX(0.9662);transform-origin:0 0;font-style:italic">键入关键字或短语</div><div class="t" id="t3" style="left:43.50px;top:21.90px;font-size:9.22px;color:#fafafa;">编辑(E)</div><div class="t" id="t4" style="left:93.00px;top:21.90px;font-size:9.21px;color:#fafafa;">工具(T)</div><div class="t" id="t5" style="left:141.00px;top:21.00px;font-size:9.60px;color:#fafafa;transform:scaleX(0.9375);transform-origin:0 0;">组(G)</div><div class="t" id="t6" style="left:181.50px;top:21.00px;font-size:9.60px;color:#fafafa;">视图(V)</div><div class="t" id="t7" style="left:232.50px;top:21.00px;font-size:9.60px;color:#fafafa;transform:scaleX(0.9545);transform-origin:0 0;">创建(C)</div><div class="t" id="t8" style="left:279.00px;top:21.00px;font-size:9.60px;color:#fafafa;">修改器</div><div class="t" id="t9" style="left:318.00px;top:21.75px;font-size:9.60px;color:#fafafa;transform:scaleX(0.9350);transform-origin:0 0;">动画</div><div class="t" id="t10" style="left:348.20px;top:21.00px;font-size:9.40px;color:#fafafa;transform:scaleX(1.0267);transform-origin:0 0;">图形编辑器</div><div class="t" id="t11" style="left:410.00px;top:21.90px;font-size:9.30px;color:#fafafa;transform:scaleX(0.9677);transform-origin:0 0;">渲染(R)</div><div class="t" id="t12" style="left:458.00px;top:21.90px;font-size:9.60px;color:#fafafa;">自定义(U)</div><div class="t" id="t13" style="left:519.00px;top:21.00px;font-size:10.18px;color:#fafafa;transform:scaleX(1.0161);transform-origin:0 0;">MAXScript(M)</div><div class="t" id="t14" style="left:601.80px;top:21.00px;font-size:9.60px;color:#fafafa;transform:scaleX(0.9788);transform-origin:0 0;">帮助(H)</div><div class="t" id="t15" style="left:88.00px;top:43.00px;font-size:10.00px;color:#111;">全部</div><div class="t" id="t16" style="left:323.00px;top:41.75px;font-size:10.00px;color:#111;transform:scaleX(0.9474);transform-origin:0 0;">视图</div><div class="t" id="t17" style="left:591.50px;top:41.50px;font-size:9.38px;color:#1a1a1a;transform:scaleX(1.0333);transform-origin:0 0;">创建选择集</div><div class="t" id="t18" style="left:31.00px;top:69.00px;font-size:9.50px;color:#c8c8c8;">正交</div><div class="t" id="t19" style="left:62.00px;top:69.00px;font-size:9.50px;color:#c8c8c8;transform:scaleX(0.9500);transform-origin:0 0;">真实</div><div class="t" id="t20" style="left:865.20px;top:93.60px;font-size:8.35px;color:#bdbdbd;">NGon001</div><div class="t" id="t21" style="left:866.00px;top:114.80px;font-size:9.58px;color:#cfcfcf;transform:scaleX(0.9360);transform-origin:0 0;">修改器列表</div><div class="t" id="t22" style="left:883.30px;top:137.70px;font-size:9.50px;color:#050505;-webkit-text-stroke:0.5px currentColor">挤出</div><div class="t" id="t23" style="left:939.80px;top:138.40px;font-size:9.34px;color:#cfcfcf;transform:scaleX(1.0670);transform-origin:0 0;">编辑面片</div><div class="t" id="t24" style="left:883.30px;top:156.00px;font-size:9.50px;color:#cfcfcf;transform:scaleX(0.9350);transform-origin:0 0;">优化</div><div class="t" id="t25" style="left:949.20px;top:155.25px;font-size:9.50px;color:#050505;transform:scaleX(0.9400);transform-origin:0 0;-webkit-text-stroke:0.5px currentColor">车削</div><div class="t" id="t26" style="left:872.00px;top:172.75px;font-size:9.15px;color:#cfcfcf;transform:scaleX(0.9707);transform-origin:0 0;">UVW 贴图</div><div class="t" id="t27" style="left:940.20px;top:173.00px;font-size:9.34px;color:#cfcfcf;transform:scaleX(1.0670);transform-origin:0 0;">涡轮平滑</div><div class="t" id="t28" style="left:874.60px;top:190.80px;font-size:9.37px;color:#050505;transform:scaleX(1.0250);transform-origin:0 0;-webkit-text-stroke:0.5px currentColor">倒角剖面</div><div class="t" id="t29" style="left:939.00px;top:190.80px;font-size:8.52px;color:#cfcfcf;transform:scaleX(0.9750);transform-origin:0 0;">UVW 展开</div><div class="t" id="t30" style="left:897.60px;top:212.00px;font-size:9.50px;color:#ffffff;">挤出</div><div class="t" id="t31" style="left:880.90px;top:226.00px;font-size:8.59px;color:#d8d8d8;transform:scaleX(0.9500);transform-origin:0 0;">NGon</div><div class="t" id="t32" style="left:868.00px;top:332.00px;font-size:9.50px;color:#dcdcdc;">-</div><div class="t" id="t33" style="left:916.90px;top:331.00px;font-size:9.50px;color:#dcdcdc;transform:scaleX(0.9250);transform-origin:0 0;">参数</div><div class="t" id="t34" style="left:896.60px;top:351.00px;font-size:9.50px;color:#dcdcdc;transform:scaleX(0.9318);transform-origin:0 0;">数量:</div><div class="t" id="t35" style="left:897.00px;top:367.00px;font-size:9.50px;color:#dcdcdc;transform:scaleX(0.9318);transform-origin:0 0;">分段:</div><div class="t" id="t36" style="left:924.00px;top:352.00px;font-size:8.70px;color:#e8e8e8;transform:scaleX(0.9583);transform-origin:0 0;">300.0mm</div><div class="t" id="t37" style="left:924.00px;top:367.00px;font-size:9.00px;color:#a8a8a8;">1</div><div class="t" id="t38" style="left:872.00px;top:380.00px;font-size:9.50px;color:#dcdcdc;">封口</div><div class="t" id="t39" style="left:872.00px;top:440.40px;font-size:9.50px;color:#dcdcdc;">输出</div><div class="t" id="t40" style="left:915.00px;top:393.00px;font-size:9.56px;color:#dcdcdc;transform:scaleX(0.9500);transform-origin:0 0;">封口始端</div><div class="t" id="t41" style="left:915.00px;top:407.00px;font-size:9.56px;color:#dcdcdc;transform:scaleX(0.9500);transform-origin:0 0;">封口末端</div><div class="t" id="t42" style="left:900.10px;top:422.65px;font-size:9.50px;color:#dcdcdc;">变形</div><div class="t" id="t43" style="left:951.00px;top:422.95px;font-size:9.00px;color:#dcdcdc;">栅格</div><div class="t" id="t44" style="left:914.00px;top:454.30px;font-size:9.00px;color:#dcdcdc;">面片</div><div class="t" id="t45" style="left:913.00px;top:468.00px;font-size:9.50px;color:#dcdcdc;transform:scaleX(0.9421);transform-origin:0 0;">网格</div><div class="t" id="t46" style="left:914.00px;top:483.00px;font-size:7.83px;color:#dcdcdc;transform:scaleX(0.9519);transform-origin:0 0;">NURBS</div><div class="t" id="t47" style="left:883.00px;top:500.90px;font-size:9.41px;color:#dcdcdc;transform:scaleX(1.0631);transform-origin:0 0;">生成贴图坐标</div><div class="t" id="t48" style="left:883.00px;top:513.00px;font-size:9.62px;color:#080808;transform:scaleX(0.9400);transform-origin:0 0;-webkit-text-stroke:0.5px currentColor">真实世界贴图大小</div><div class="t" id="t49" style="left:883.00px;top:526.75px;font-size:9.27px;color:#dcdcdc;">生成材质 ID</div><div class="t" id="t50" style="left:896.00px;top:539.00px;font-size:9.10px;color:#dcdcdc;">使用图形 ID</div><div class="t" id="t51" style="left:883.00px;top:553.00px;font-size:9.50px;color:#dcdcdc;transform:scaleX(0.9714);transform-origin:0 0;">平滑</div><div class="t" id="t52" style="left:4.00px;top:696.00px;font-size:10.00px;color:#c0c0c0;transform:scaleX(0.8667);transform-origin:0 0;">&lt;</div><div class="t" id="t53" style="left:47.00px;top:697.45px;font-size:9.00px;color:#c0c0c0;">0 / 100</div><div class="t" id="t54" style="left:113.60px;top:696.00px;font-size:10.00px;color:#c0c0c0;transform:scaleX(0.8667);transform-origin:0 0;">&gt;</div><div class="t" id="t55" style="left:40.50px;top:719.00px;font-size:8.00px;color:#4a4a10;">0</div><div class="t" id="t56" style="left:5.00px;top:751.00px;font-size:9.00px;color:#d02020;">一</div><div class="t" id="t57" style="left:24.00px;top:752.00px;font-size:9.50px;color:#d02020;transform:scaleX(0.9531);transform-origin:0 0;">所在行:</div><div class="t" id="t58" style="left:67.00px;top:752.00px;font-size:9.50px;color:#d02020;">&lt;</div><div class="t" id="t59" style="left:87.60px;top:737.40px;font-size:9.21px;color:#d0d0d0;transform:scaleX(1.0062);transform-origin:0 0;">选择了 1 个 对象</div><div class="t" id="t60" style="left:87.60px;top:755.20px;font-size:9.71px;color:#d0d0d0;transform:scaleX(0.9354);transform-origin:0 0;">单击或单击并拖动以选择对象</div><div class="t" id="t61" style="left:368.20px;top:737.00px;font-size:9.00px;color:#c8c8c8;transform:scaleX(0.9000);transform-origin:0 0;">X:</div><div class="t" id="t62" style="left:432.00px;top:737.00px;font-size:9.00px;color:#c8c8c8;">Y:</div><div class="t" id="t63" style="left:497.00px;top:737.00px;font-size:9.00px;color:#c8c8c8;transform:scaleX(1.0673);transform-origin:0 0;">Z:</div><div class="t" id="t64" style="left:566.00px;top:736.00px;font-size:8.77px;color:#c8c8c8;">栅格 = 10.0mm</div><div class="t" id="t65" style="left:566.00px;top:755.30px;font-size:9.41px;color:#c8c8c8;transform:scaleX(1.0370);transform-origin:0 0;">添加时间标记</div><div class="t" id="t66" style="left:676.70px;top:736.00px;font-size:9.50px;color:#d0d0d0;transform:scaleX(0.9854);transform-origin:0 0;">自动关键点</div><div class="t" id="t67" style="left:678.00px;top:753.00px;font-size:9.52px;color:#d0d0d0;transform:scaleX(0.9653);transform-origin:0 0;">设置关键点</div><div class="t" id="t68" style="left:732.10px;top:735.75px;font-size:9.61px;color:#111;transform:scaleX(0.9175);transform-origin:0 0;">选定对象</div><div class="t" id="t69" style="left:753.10px;top:753.00px;font-size:9.46px;color:#d0d0d0;transform:scaleX(1.0427);transform-origin:0 0;">关键点过滤器...</div><div class="t" id="t70" style="left:851.00px;top:752.00px;font-size:9.00px;color:#d0d0d0;">0</div><div class="a" style="left:766px;top:732px;width:80px;height:14px;overflow:hidden"><div class="t" style="left:4px;top:-6px;font-size:21px;color:#ffffff;letter-spacing:0.6px;-webkit-text-stroke:0.4px #fff">jingyan</div></div><div class="a" style="left:831px;top:733px;width:112px;height:13px;overflow:hidden"><div class="t" style="left:0px;top:-2px;font-size:15px;color:#f0f0f0;font-weight:bold;transform:scaleY(-1) scaleX(0.72);transform-origin:0 50%;letter-spacing:0px;-webkit-text-stroke:0">Bß.ıɐıɐpʎɐıɐ .ɔoɯ ɐɹı</div></div>
</body></html>
